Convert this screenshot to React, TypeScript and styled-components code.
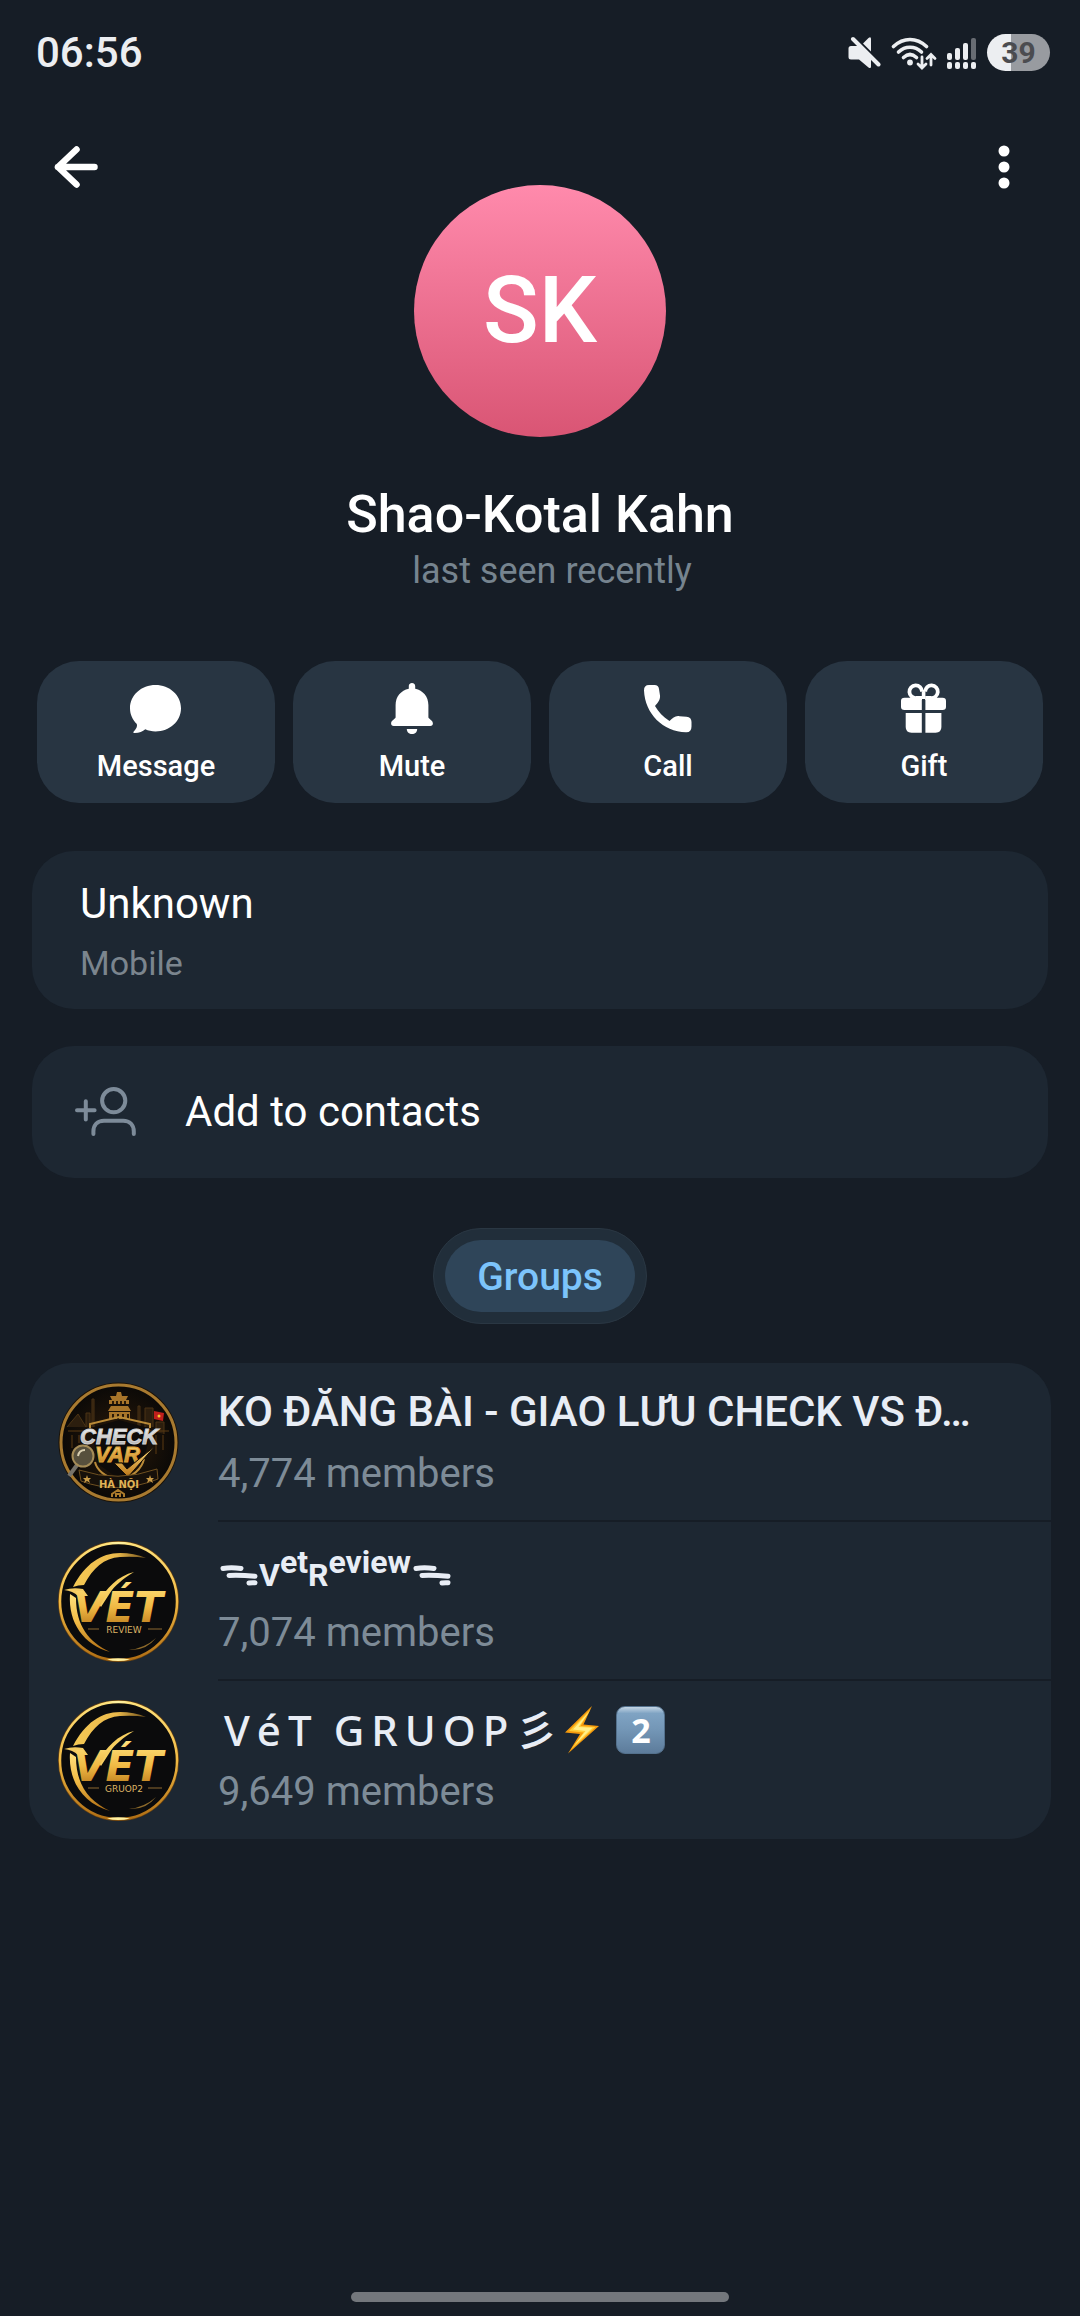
import type { ReactNode } from 'react';
import styled, { createGlobalStyle } from 'styled-components';

const GlobalStyle = createGlobalStyle`
  * {
    box-sizing: border-box;
  }

  body {
    margin: 0;
    background: #161d26;
    font-family: Roboto, 'Noto Sans', 'Noto Sans CJK JP', sans-serif;
    color: #ffffff;
  }

  button {
    border: 0;
    padding: 0;
    background: none;
    color: inherit;
    font: inherit;
    cursor: pointer;
  }

  svg {
    display: block;
    flex: none;
  }
`;

const Page = styled.div`
  display: flex;
  flex-direction: column;
  min-height: 100vh;
`;

const StatusBar = styled.div`
  display: flex;
  align-items: center;
  justify-content: space-between;
  height: 105px;
  padding: 0 30px 0 36px;
  color: #eceef1;
`;

const Clock = styled.time`
  font-size: 42px;
  line-height: 50px;
  font-weight: 500;
`;

const StatusIcons = styled.div`
  display: flex;
  align-items: center;
  gap: 10px;
`;

const Battery = styled.div`
  display: flex;
  align-items: center;
  justify-content: center;
  width: 63px;
  height: 37px;
  border-radius: 19px;
  background: linear-gradient(to right, #eceef1 24px, #989ba0 24px);
  color: #4b4c50;
  font-size: 30px;
  line-height: 36px;
  font-weight: 700;
`;

const Header = styled.header`
  display: grid;
  grid-template-columns: 1fr auto 1fr;
  align-items: start;
  padding: 26px 40px 0;
`;

const IconButton = styled.button<{ $end?: boolean }>`
  display: flex;
  align-items: center;
  justify-content: center;
  justify-self: ${({ $end }) => ($end ? 'end' : 'start')};
  width: 72px;
  height: 72px;
`;

const Avatar = styled.div`
  display: flex;
  align-items: center;
  justify-content: center;
  width: 252px;
  height: 252px;
  margin-top: 54px;
  border-radius: 50%;
  background: linear-gradient(#ff8aac, #d95574);
  font-size: 92px;
  line-height: 108px;
  font-weight: 500;
`;

const Name = styled.h1`
  margin: 48px 0 0;
  font-size: 52px;
  line-height: 60px;
  font-weight: 500;
  text-align: center;
`;

const LastSeen = styled.p`
  margin: 4px 0 0;
  padding-left: 24px;
  color: #76848f;
  font-size: 36px;
  line-height: 44px;
  text-align: center;
`;

const Actions = styled.div`
  display: grid;
  grid-template-columns: repeat(4, 1fr);
  gap: 18px;
  margin-top: 68px;
  padding: 0 37px;
`;

const ActionButton = styled.button`
  && {
    display: flex;
    flex-direction: column;
    align-items: center;
    gap: 13px;
    padding: 22px 0 19px;
    border-radius: 42px;
    background: #283542;
    font-size: 29px;
    line-height: 36px;
    font-weight: 500;
  }
`;

const Cards = styled.div`
  display: flex;
  flex-direction: column;
  gap: 37px;
  margin-top: 48px;
  padding: 0 32px;
`;

const PhoneCard = styled.section`
  padding: 28px 48px 26px;
  border-radius: 42px;
  background: #1d2732;
`;

const CardText = styled.div`
  font-size: 42px;
  line-height: 50px;
`;

const CardHint = styled.div`
  margin-top: 14px;
  color: #7b858e;
  font-size: 34px;
  line-height: 40px;
`;

const AddContactButton = styled.button`
  && {
    display: flex;
    align-items: center;
    gap: 49px;
    height: 132px;
    padding: 0 43px;
    border-radius: 42px;
    background: #1d2732;
    font-size: 42px;
    line-height: 50px;
  }
`;

const Tabs = styled.nav`
  align-self: center;
  margin-top: 50px;
  padding: 11px;
  border: 1px solid #2a3743;
  border-radius: 48px;
  background: #212e3a;
`;

const Tab = styled.button`
  && {
    height: 72px;
    padding: 2px 32px 0;
    border-radius: 36px;
    background: #2f4559;
    color: #7cc4fb;
    font-size: 39px;
    line-height: 44px;
    font-weight: 500;
  }
`;

const GroupList = styled.ul`
  margin: 39px 29px 0;
  padding: 0;
  border-radius: 42px;
  background: #1d2732;
  list-style: none;
`;

const GroupRow = styled.li`
  display: flex;
  align-items: center;
  gap: 39px;
  padding-left: 29px;
`;

const GroupInfo = styled.div`
  flex: 1;
  min-width: 0;
  height: 159px;
  padding-top: 24px;
  border-bottom: 2px solid #161d26;

  ${GroupRow}:last-child & {
    height: 158px;
    border-bottom: 0;
  }
`;

const GroupTitle = styled.div`
  display: flex;
  align-items: center;
  height: 50px;
  color: #e8edf5;
  font-size: 42px;
  line-height: 50px;
  font-weight: 500;
  white-space: nowrap;
`;

const Members = styled.div`
  margin-top: 13px;
  color: #7d8b97;
  font-size: 40px;
  line-height: 48px;
`;

const SmallTitle = styled.span`
  padding-bottom: 6px;
  font-size: 32px;
  line-height: 34px;
  font-weight: 700;
`;

const Raised = styled.span`
  vertical-align: 13px;
`;

const WideTitle = styled.span`
  padding: 0 8px 0 6px;
  font-family: 'Noto Sans', 'Noto Sans CJK JP', sans-serif;
`;

const Keycap = styled.span`
  display: flex;
  align-items: center;
  justify-content: center;
  width: 49px;
  height: 48px;
  margin-left: 17px;
  border: 1px solid #54718d;
  border-radius: 9px;
  background: linear-gradient(#c3d5e4, #7fa3c3 14%, #7396b6 50%, #5d7c9b);
  color: #ffffff;
  font-family: 'Noto Sans', sans-serif;
  font-size: 34px;
  line-height: 40px;
  font-weight: 700;
`;

const HomeIndicator = styled.div`
  align-self: center;
  width: 35%;
  height: 10px;
  margin: auto 0 14px;
  border-radius: 5px;
  background: #73777c;
`;

function MutedIcon() {
  return (
    <svg width='33' height='34' viewBox='0 0 33 34' fill='currentColor'>
      <path d='M3 10H10L23 23V30.500Q23 33 20.500 31.500L11 23.500H3Q0.500 23.500 0.500 21V12.500Q0.500 10 3 10Z' />
      <path d='M15 7.500L20.500 2Q23 0.200 23 3V15.500Z' />
      <path d='M5 3L30.500 28.500' stroke='currentColor' strokeWidth='4' strokeLinecap='round' />
    </svg>
  );
}

function WifiIcon() {
  return (
    <svg width='46' height='34' viewBox='0 0 46 34' fill='none' stroke='currentColor' strokeWidth='3.600' strokeLinecap='round'>
      <path d='M2.500 10.500Q10 3.500 19 3.500T35.500 10.500' />
      <path d='M7.500 16Q12.500 11.200 19 11.200T30.500 16' />
      <path d='M12.500 21.500Q19 15.500 25.500 21.500' />
      <circle cx='19' cy='26.500' r='2.900' fill='currentColor' stroke='none' />
      <path d='M31 21V31M27 28L31 32L35 28M40 29V19M36 22.500L40 18.500L44 22.500' strokeWidth='2.800' />
    </svg>
  );
}

function SignalIcon() {
  return (
    <svg width='30' height='34' viewBox='0 0 30 34' fill='currentColor'>
      <rect x='0' y='17' width='5' height='7' rx='2' />
      <rect x='8' y='12' width='5' height='12' rx='2' />
      <rect x='16' y='7' width='5' height='17' rx='2' />
      <rect x='24' y='2' width='5' height='22' rx='2' fill='#686c73' />
      <rect x='0' y='26' width='5' height='7' rx='2' />
      <rect x='8' y='26' width='5' height='7' rx='2' />
      <rect x='16' y='26' width='5' height='7' rx='2' />
      <rect x='24' y='26' width='5' height='7' rx='2' />
    </svg>
  );
}

function BackIcon() {
  return (
    <svg width='48' height='48' viewBox='0 0 48 48' fill='none' stroke='currentColor' strokeWidth='6.500' strokeLinecap='round' strokeLinejoin='round'>
      <path d='M42.500 24H6M24.500 6.500L6 24L24.500 41.500' />
    </svg>
  );
}

function MoreIcon() {
  return (
    <svg width='12' height='44' viewBox='0 0 12 44' fill='currentColor'>
      <circle cx='6' cy='6' r='5.500' />
      <circle cx='6' cy='22' r='5.500' />
      <circle cx='6' cy='38' r='5.500' />
    </svg>
  );
}

function MessageIcon() {
  return (
    <svg width='52' height='52' viewBox='0 0 52 52' fill='currentColor'>
      <path d='M25.500 2C39.500 2 51 12 51 25.200C51 38.500 39.500 48.400 25.500 48.400C21.700 48.400 18.200 47.500 15.300 46.200C12.500 48.500 9 50.200 4 50C3 49.900 3.200 49 4 48.200C6.500 45.800 7.500 43 6.800 41C2.800 37 0 31.800 0 25.200C0 12 11.500 2 25.500 2Z' />
    </svg>
  );
}

function BellIcon() {
  return (
    <svg width='52' height='52' viewBox='0 0 52 52' fill='currentColor'>
      <path d='M26 0C28 0 29.200 1.400 29.200 3V5.800C37 7.500 42.400 13.500 42.400 22V34.500C43.500 36.500 46.900 37.500 46.900 40.500C46.900 42 46 43 44.300 43H7.700C6 43 5.100 42 5.100 40.500C5.100 37.500 8.500 36.500 9.600 34.500V22C9.600 13.500 15 7.500 22.800 5.800V3C22.800 1.400 24 0 26 0Z' />
      <path d='M20.800 46H31.200C31.200 49 29 51 26 51S20.800 49 20.800 46Z' />
    </svg>
  );
}

function CallIcon() {
  return (
    <svg width='52' height='52' viewBox='0 0 52 52' fill='currentColor'>
      <path d='M7 2H12.500Q16.500 2 17 6L18 12.500C18.500 17 15.500 20 13 23C16.500 29 21 34 27.500 38C31 35 33 32.500 37.500 33.200L44.500 33.700Q49.500 34.200 49.500 39V43.500Q49.500 49.500 44 49.300C21 48.500 3 31 2 7.500Q1.900 2 7 2Z' />
    </svg>
  );
}

function GiftIcon() {
  return (
    <svg width='52' height='52' viewBox='0 0 52 52' fill='currentColor'>
      <path d='M24 15H18.300A6.300 6.300 0 1 1 24 8.700M27.200 15H32.800A6.300 6.300 0 1 0 27.200 8.700' fill='none' stroke='currentColor' strokeWidth='3.800' />
      <path d='M23.800 16V9.500L25.600 6.500L27.400 9.500V16Z' />
      <path d='M6.500 14.700H23.800V27H6.500Q3 27 3 24V18Q3 14.700 6.500 14.700ZM27.400 14.700H44.500Q48 14.700 48 18V24Q48 27 44.500 27H27.400ZM7.700 30H23.800V49.700H13.500Q7.700 49.700 7.700 44ZM27.400 30H43.400V44Q43.400 49.700 37.600 49.700H27.400Z' />
    </svg>
  );
}

function AddContactIcon() {
  return (
    <svg width='61' height='50' viewBox='0 0 61 50' fill='none' stroke='#7d8b99' strokeWidth='4' strokeLinecap='round'>
      <circle cx='38.700' cy='13.700' r='11.600' />
      <path d='M18.400 47V44.500C18.400 38 22.500 33.700 29 33.700H48.200C54.700 33.700 58.800 38 58.800 44.500V47' />
      <path d='M2 23.300H19.600M10.800 14.200V32.400' />
    </svg>
  );
}

// decorative stroke round the small-caps group name
function WindMark() {
  return (
    <svg width='41' height='36' viewBox='0 0 41 36' fill='none' stroke='currentColor' strokeWidth='5' strokeLinecap='round'>
      <path d='M5 15.500Q13 14 23 15.500' />
      <path d='M11 22.500Q22 22 37 23.200' />
      <path d='M31 30Q34 29.500 37 29.800' />
    </svg>
  );
}

function BoltIcon() {
  return (
    <svg width='34' height='48' viewBox='0 0 34 48'>
      <path d='M27 0L0 26.500L15 28L3 47.500L34 20L18.500 18.500Z' fill='#f59a0c' />
      <path d='M25.500 3.500L4 25L18.500 26.500L6 43.500L30.500 21L15.500 20Z' fill='#ffce3a' />
      <path d='M24 6L8 23.500L20.500 25L10 38.500L27.500 21.800L13.500 21Z' fill='#fff08a' />
    </svg>
  );
}

function CheckVarLogo() {
  return (
    <svg width='121' height='121' viewBox='0 0 121 121'>
      <defs>
        <linearGradient id='cv-gold' x2='0' y2='1'>
          <stop offset='0' stopColor='#ffe083' />
          <stop offset='1' stopColor='#b97415' />
        </linearGradient>
        <linearGradient id='cv-silver' x2='0' y2='1'>
          <stop offset='0' stopColor='#ffffff' />
          <stop offset='1' stopColor='#a3a3a3' />
        </linearGradient>
        <radialGradient id='cv-back'>
          <stop offset='0' stopColor='#2c1b0a' />
          <stop offset='1' stopColor='#0b0907' />
        </radialGradient>
      </defs>
      <circle cx='60.500' cy='60.500' r='60' fill='#1b1206' />
      <circle cx='60.500' cy='60.500' r='57.500' fill='url(#cv-back)' stroke='#a87a30' strokeWidth='3' />
      <path d='M9 45L20 32L28 45V31H32V45M34 45V17H36V45M80 45V24H82V45M87 45V26H95V45M98 50V40H106V52' fill='#2c1e0e' stroke='#4a3314' strokeWidth='1' />
      <path d='M10 49H38M84 49H111M14 53V66M21 53V61M98 53V72M105 53V68' stroke='#5a3b13' strokeWidth='1' />
      <path d='M59 10H63L64 14H70L68 18H71V22H51V18H54L52 14H58ZM53 24H70L73 29H50ZM51 30H72V37H51Z' fill='#a8752a' />
      <path d='M55 19V22M59 19V22M63 19V22M67 19V22M55 32V37M60 32V37M65 32V37M70 32V37' stroke='#2a1a08' strokeWidth='2' />
      <path d='M33 46L61 38L90 46V62L84 82L61 97L40 82Z' fill='#0e0b09' />
      <path d='M32 46V42L61 35L92 42V46M37 80C39 89 48 95 61 99C76 94 84 86 86 77' fill='none' stroke='#b98a38' strokeWidth='2' />
      <path d='M96 29L106 31L105 39L96 37Z' fill='#c01f1c' />
      <circle cx='101' cy='34' r='1.500' fill='#f6c832' />
      <text x='22' y='62' fontFamily='Liberation Sans' fontSize='22' fontWeight='700' fontStyle='italic' fill='url(#cv-silver)' stroke='#d0d0d0' strokeWidth='1'>CHECK</text>
      <text x='37' y='80' fontFamily='Liberation Sans' fontSize='22' fontWeight='700' fontStyle='italic' fill='url(#cv-gold)' stroke='#dfa035' strokeWidth='1'>VAR</text>
      <path d='M56 81L64 81L69 87L97 64L70 95Z' fill='url(#cv-gold)' stroke='#1a1005' strokeWidth='1' />
      <path d='M19 83L11 94' stroke='#77736a' strokeWidth='4' />
      <circle cx='25' cy='74' r='10.500' fill='#57503d' stroke='#a58c57' strokeWidth='2' />
      <path d='M20 74Q21 68 27 68' fill='none' stroke='#d8ceb0' strokeWidth='2' />
      <path d='M21 88Q60 101 99 87L100 97Q60 113 23 99Z' fill='#16100a' stroke='#6f5020' strokeWidth='1' />
      <text x='61' y='106' textAnchor='middle' fontFamily='DejaVu Sans' fontSize='10' fontWeight='700' fill='#e0b356'>HÀ NỘI</text>
      <path d='M29 93L30 96H33L31 98L32 101L29 99L26 101L27 98L25 96H28ZM92 93L93 96H96L94 98L95 101L92 99L89 101L90 98L88 96H91Z' fill='#c79a47' />
      <path d='M54 115V112L60 108L66 112V115M58 115V112H62V115' fill='none' stroke='#ad7c2c' strokeWidth='2' />
    </svg>
  );
}

function VetLogo({ id, caption }: { id: string; caption: string }) {
  return (
    <svg width='121' height='121' viewBox='0 0 121 121'>
      <defs>
        <linearGradient id={`${id}-gold`} x2='0' y2='1'>
          <stop offset='0' stopColor='#ffe27c' />
          <stop offset='0.500' stopColor='#f0b944' />
          <stop offset='1' stopColor='#b06e14' />
        </linearGradient>
        <linearGradient id={`${id}-fade`} x2='1' y2='0'>
          <stop offset='0' stopColor='#f5c955' />
          <stop offset='0.600' stopColor='#ebb94b' />
          <stop offset='1' stopColor='#6e4f1a' />
        </linearGradient>
      </defs>
      <circle cx='60.500' cy='60.500' r='60.500' fill='#6d4410' />
      <circle cx='60.500' cy='60.500' r='58.500' fill='#0b0b0c' stroke={`url(#${id}-gold)`} strokeWidth='2.500' />
      <path d='M50 2Q60 0 71 2Q60 4 50 2ZM49 118.500Q60 116 72 118.500Q60 121.500 49 118.500Z' fill='#fff0a0' />
      <path d='M15 46C27 23 43 12 62 12Q76 12 88 17Q76 15 62 16C46 17 35 27 26 44Q20 44 15 46Z' fill={`url(#${id}-fade)`} />
      <path d='M12 53C10 82 26 104 52 111C31 101 18 85 18 57Z' fill={`url(#${id}-gold)`} />
      <path d='M71 109Q87 107 98 97Q88 110 71 109Z' fill='#8d6a2b' />
      <path d='M6 49Q15 46 25 48L30 55H20Q15 50 6 49Z' fill='#f3cb62' />
      <path d='M40 62C48 47 60 35 76 31C65 38 57 44 52 52L43 66Z' fill='#f7cf60' />
      <text x='15' y='81' fontFamily='DejaVu Sans' fontSize='42' fontWeight='700' fontStyle='italic' fill={`url(#${id}-gold)`}>VÉT</text>
      <path d='M30 88H41M90 88H104' stroke='#8c6930' strokeWidth='1' />
      <text x='66' y='92' textAnchor='middle' fontFamily='DejaVu Sans' fontSize='9' fill='#dcb365'>{caption}</text>
    </svg>
  );
}

const actions: { label: string; icon: ReactNode }[] = [
  { label: 'Message', icon: <MessageIcon /> },
  { label: 'Mute', icon: <BellIcon /> },
  { label: 'Call', icon: <CallIcon /> },
  { label: 'Gift', icon: <GiftIcon /> },
];

const groups: { logo: ReactNode; title: ReactNode; members: string }[] = [
  {
    logo: <CheckVarLogo />,
    title: 'KO ĐĂNG BÀI - GIAO LƯU CHECK VS Đ…',
    members: '4,774 members',
  },
  {
    logo: <VetLogo id='review' caption='REVIEW' />,
    title: (
      <>
        <WindMark />
        <SmallTitle>
          V<Raised>et</Raised>R<Raised>eview</Raised>
        </SmallTitle>
        <WindMark />
      </>
    ),
    members: '7,074 members',
  },
  {
    logo: <VetLogo id='gruop' caption='GRUOP2' />,
    title: (
      <>
        <WideTitle>{'V\u2006é\u2006T\u2006\u200a G\u2006R\u2006U\u2006O\u2006P\u2006彡'}</WideTitle>
        <BoltIcon />
        <Keycap>2</Keycap>
      </>
    ),
    members: '9,649 members',
  },
];

export default function App() {
  return (
    <Page>
      <GlobalStyle />
      <StatusBar>
        <Clock>06:56</Clock>
        <StatusIcons>
          <MutedIcon />
          <WifiIcon />
          <SignalIcon />
          <Battery>39</Battery>
        </StatusIcons>
      </StatusBar>
      <Header>
        <IconButton aria-label='Back'>
          <BackIcon />
        </IconButton>
        <Avatar>SK</Avatar>
        <IconButton $end aria-label='More options'>
          <MoreIcon />
        </IconButton>
      </Header>
      <Name>Shao-Kotal Kahn</Name>
      <LastSeen>last seen recently</LastSeen>
      <Actions>
        {actions.map(({ label, icon }) => (
          <ActionButton key={label}>
            {icon}
            {label}
          </ActionButton>
        ))}
      </Actions>
      <Cards>
        <PhoneCard>
          <CardText>Unknown</CardText>
          <CardHint>Mobile</CardHint>
        </PhoneCard>
        <AddContactButton>
          <AddContactIcon />
          Add to contacts
        </AddContactButton>
      </Cards>
      <Tabs>
        <Tab>Groups</Tab>
      </Tabs>
      <GroupList>
        {groups.map(({ logo, title, members }) => (
          <GroupRow key={members}>
            {logo}
            <GroupInfo>
              <GroupTitle>{title}</GroupTitle>
              <Members>{members}</Members>
            </GroupInfo>
          </GroupRow>
        ))}
      </GroupList>
      <HomeIndicator />
    </Page>
  );
}
